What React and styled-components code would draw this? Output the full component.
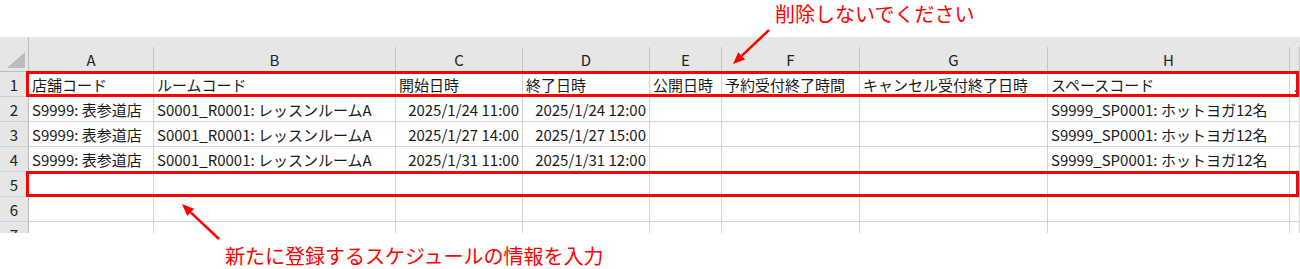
import React from 'react'
import styled, { createGlobalStyle } from 'styled-components'

const COLS = '29px 125px 242px 127px 127px 72px 138px 188px 242px 1fr'
const LETTERS = ['A', 'B', 'C', 'D', 'E', 'F', 'G', 'H', '']

const rows = [
    { cells: ['店舗コード', 'ルームコード', '開始日時', '終了日時', '公開日時', '予約受付終了時間', 'キャンセル受付終了日時', 'スペースコード', 'スペース名'], highlight: true },
    { cells: ['S9999: 表参道店', 'S0001_R0001: レッスンルームA', '2025/1/24 11:00', '2025/1/24 12:00', '', '', '', 'S9999_SP0001: ホットヨガ12名', ''] },
    { cells: ['S9999: 表参道店', 'S0001_R0001: レッスンルームA', '2025/1/27 14:00', '2025/1/27 15:00', '', '', '', 'S9999_SP0001: ホットヨガ12名', ''] },
    { cells: ['S9999: 表参道店', 'S0001_R0001: レッスンルームA', '2025/1/31 11:00', '2025/1/31 12:00', '', '', '', 'S9999_SP0001: ホットヨガ12名', ''] },
    { cells: ['', '', '', '', '', '', '', '', ''], highlight: true },
    { cells: ['', '', '', '', '', '', '', '', ''] },
    { cells: ['', '', '', '', '', '', '', '', ''] },
]

// date columns are right aligned like Excel does for numbers
const RIGHT = [2, 3]

function App() {
    return (
        <>
            <GlobalStyle />
            <Page>
                <TopNote>削除しないでください</TopNote>

                <Sheet>
                    <HeaderRow>
                        <Corner>
                            <Triangle />
                        </Corner>
                        {LETTERS.map((l, i) => (
                            <ColHead key={i}>{l}</ColHead>
                        ))}
                    </HeaderRow>

                    {rows.map((row, r) => (
                        <Row key={r} $highlight={row.highlight}>
                            <RowNum>{r + 1}</RowNum>
                            {row.cells.map((c, i) => (
                                <Cell key={i} $right={RIGHT.includes(i) && r > 0}>{c}</Cell>
                            ))}
                        </Row>
                    ))}
                </Sheet>

                <BottomNote>新たに登録するスケジュールの情報を入力</BottomNote>

                <ArrowLayer width="1300" height="269" viewBox="0 0 1300 269">
                    <line x1="769" y1="30" x2="741.7" y2="55.8" stroke="#f00" strokeWidth="2.5" />
                    <polygon points="733,64 745.1,59.4 738.3,52.2" fill="#f00" />
                    <line x1="219" y1="239" x2="190.7" y2="212.3" stroke="#f00" strokeWidth="2.5" />
                    <polygon points="182,204 194.1,208.7 187.3,215.9" fill="#f00" />
                </ArrowLayer>
            </Page>
        </>
    )
}

export default App

const GlobalStyle = createGlobalStyle`
    html, body {
        margin: 0;
        padding: 0;
        background: #fff;
        overflow: hidden;
    }
    * {
        box-sizing: border-box;
    }
`

const Page = styled.div`
    position: relative;
    width: 1300px;
    height: 269px;
    overflow: hidden;
    font-family: "Noto Sans CJK JP", "Noto Sans", sans-serif;
    color: #1a1a1a;
`

const TopNote = styled.div`
    height: 37px;
    padding: 0 0 0 775px;
    font-size: 20px;
    line-height: 27px;
    color: #f00;
`

const BottomNote = styled.div`
    height: 36px;
    padding: 9px 0 0 225px;
    font-size: 20px;
    line-height: 27px;
    color: #f00;
`

const Sheet = styled.div`
    height: 196px;
    overflow: hidden;
`

const HeaderRow = styled.div`
    display: grid;
    grid-template-columns: ${COLS};
    align-items: end;
    height: 35px;
    background: #e6e6e6;
    border-bottom: 1px solid #bcbcbc;
`

const Corner = styled.div`
    height: 34px;
    display: flex;
    justify-content: flex-end;
    align-items: flex-end;
    padding: 0 3px 3px 0;
    border-right: 1px solid #bcbcbc;
`

const Triangle = styled.div`
    width: 18px;
    height: 16px;
    background: #bdbdbd;
    clip-path: polygon(100% 0, 100% 100%, 0 100%);
`

const ColHead = styled.div`
    height: 24px;
    display: flex;
    align-items: center;
    justify-content: center;
    border-right: 1px solid #c4c4c4;
    font-size: 15px;
    color: #222;
`

const Row = styled.div`
    position: relative;
    display: grid;
    grid-template-columns: ${COLS};
    height: 25px;

    ${({ $highlight }) => $highlight && `
        &::after {
            content: '';
            position: absolute;
            left: 26px;
            right: 1px;
            top: -1px;
            bottom: 0;
            border: 3px solid #f00;
            pointer-events: none;
        }
    `}
`

const RowNum = styled.div`
    display: flex;
    align-items: center;
    justify-content: center;
    background: #e6e6e6;
    border-right: 1px solid #bcbcbc;
    border-bottom: 1px solid #d0d0d0;
    font-size: 15px;
    color: #222;
`

const Cell = styled.div`
    display: flex;
    align-items: center;
    justify-content: ${({ $right }) => ($right ? 'flex-end' : 'flex-start')};
    padding: 0 3px;
    border-right: 1px solid #d4d4d4;
    border-bottom: 1px solid #d4d4d4;
    font-size: 15px;
    white-space: nowrap;
    overflow: hidden;
`

const ArrowLayer = styled.svg`
    position: absolute;
    left: 0;
    top: 0;
    pointer-events: none;
`
